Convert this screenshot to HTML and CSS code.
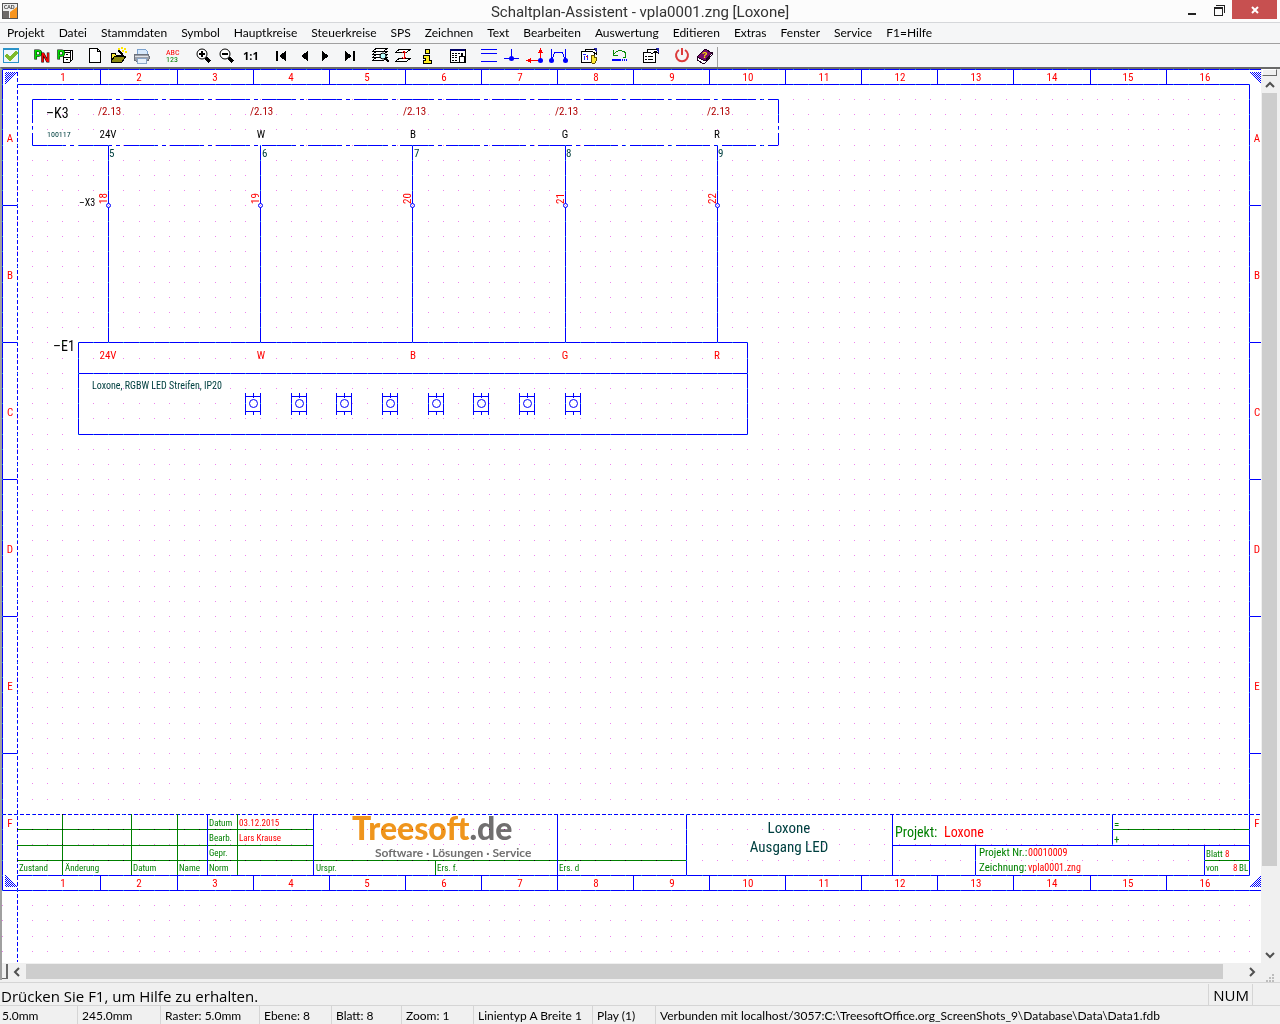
FILE: index.html
```html
<!DOCTYPE html>
<html lang="de">
<head>
    <meta charset="UTF-8">
    <meta name="viewport" content="width=device-width, initial-scale=1.0">
    <title>Schaltplan-Assistent - vpla0001.zng [Loxone]</title>
    <link rel="stylesheet" href="styles.css">
</head>
<body>
    <header class="titlebar">
        <svg class="app-icon" width="16" height="16" viewBox="0 0 16 16" aria-hidden="true">
            <rect width="16" height="16" fill="#555"/>
            <rect x="1" y="1" width="14" height="14" fill="#eee"/>
            <path d="M1 8h6v7H1z" fill="#6d6a68"/>
            <path d="M8 15V9l7-5v11z" fill="#f7941d"/>
            <text x="2" y="6" font-size="5" font-weight="700" fill="#333">CAD</text>
        </svg>
        <h1>Schaltplan-Assistent - vpla0001.zng [Loxone]</h1>
        <div class="window-buttons">
            <button class="win-btn" aria-label="Minimieren"><svg width="10" height="12"><path d="M1 9h8v2H1z" fill="#222"/></svg></button>
            <button class="win-btn" aria-label="Wiederherstellen"><svg width="12" height="12"><path d="M1 3h8v8H1zM1 4h8M3 1h8v8" fill="none" stroke="#222" shape-rendering="crispEdges"/></svg></button>
            <button class="win-btn close" aria-label="Schließen"><svg width="10" height="10"><path d="M2 2l6 6M8 2L2 8" stroke="#fff" stroke-width="2"/></svg></button>
        </div>
    </header>

    <nav class="menubar">
        <button>Projekt</button>
        <button>Datei</button>
        <button>Stammdaten</button>
        <button>Symbol</button>
        <button>Hauptkreise</button>
        <button>Steuerkreise</button>
        <button>SPS</button>
        <button>Zeichnen</button>
        <button>Text</button>
        <button>Bearbeiten</button>
        <button>Auswertung</button>
        <button>Editieren</button>
        <button>Extras</button>
        <button>Fenster</button>
        <button>Service</button>
        <button>F1=Hilfe</button>
    </nav>

    <div class="toolbar" role="toolbar">
        <div class="tool-group">
            <button aria-label="Auswahl"><svg viewBox="0 0 23 18"><rect x="3" y="1" width="15" height="14" fill="#eef7fc" stroke="#2b93c8"/><path d="M3 2h15" stroke="#2b93c8" stroke-width="2"/><path d="M6 8l4 4 7-7" fill="none" stroke="#7cba2c" stroke-width="3"/></svg></button>
        </div>
        <div class="tool-group">
            <button aria-label="Projekt neu"><svg viewBox="0 0 23 18"><text class="ico-letter green" x="3" y="12">P</text><text class="ico-letter red" x="10" y="15">N</text></svg></button>
            <button aria-label="Projekt archivieren"><svg viewBox="0 0 23 18"><path d="M9 5l2-2h7v10l-2 2H9z" fill="#fff" stroke="#000"/><path d="M9 5h7v10M16 5l2-2M9 10h7M12 7h2M12 12h2" fill="none" stroke="#000"/><text class="ico-letter green" x="3" y="12">P</text></svg></button>
        </div>
        <div class="tool-group">
            <button aria-label="Neu"><svg viewBox="0 0 23 18"><path d="M4.500 1.500h8l3 3v11h-11zM12.500 1.500v3h3" fill="#fff" stroke="#000"/></svg></button>
            <button aria-label="Öffnen"><svg viewBox="0 0 23 18"><path d="M3 14V6h4l1 2h6v3" fill="#ffef3c" stroke="#000"/><path d="M3 14l4-5h11l-4 6H3z" fill="#8b8b10" stroke="#000"/><path d="M9 4l5 5 3 1-2-3-4-4z" fill="#000"/><path d="M10 2h2M13 1h2M16 2h2M14 4h2M17 5h2" stroke="#ffe800" stroke-width="2"/></svg></button>
            <button aria-label="Drucken"><svg viewBox="0 0 23 18"><path d="M6 8V2h8l2 2v4" fill="#d6e8fb" stroke="#7ba2cf"/><rect x="3" y="7" width="15" height="7" rx="2" fill="#9a9fa8" stroke="#6c717b"/><rect x="6" y="11" width="9" height="5" fill="#e8f1fb" stroke="#8aa5c7"/><path d="M4 9h13" stroke="#dfe2e8"/></svg></button>
        </div>
        <div class="tool-group">
            <button aria-label="Nummerierung"><svg viewBox="0 0 23 18"><text class="ico-abc red" x="4" y="8">ABC</text><text class="ico-abc dark-green" x="4" y="15">123</text></svg></button>
        </div>
        <div class="tool-group">
            <button aria-label="Vergrößern"><svg viewBox="0 0 23 18"><circle cx="9" cy="7" r="5" fill="#fff" stroke="#000"/><path d="M6 7h6M9 4v6" stroke="#000" stroke-width="2"/><path d="M13 11l4 4" stroke="#000" stroke-width="3"/></svg></button>
            <button aria-label="Verkleinern"><svg viewBox="0 0 23 18"><circle cx="9" cy="7" r="5" fill="#fff" stroke="#000"/><path d="M6 7h6" stroke="#000" stroke-width="2"/><path d="M13 11l4 4" stroke="#000" stroke-width="3"/></svg></button>
            <button aria-label="Zoom 1:1"><svg viewBox="0 0 23 18"><text class="ico-one" x="4" y="13">1:1</text></svg></button>
        </div>
        <div class="tool-group">
            <button aria-label="Erstes Blatt"><svg viewBox="0 0 23 18"><path d="M6 4h2v10H6zM16 4v10L9 9z"/></svg></button>
            <button aria-label="Blatt zurück"><svg viewBox="0 0 23 18"><path d="M15 4v10L8 9z"/></svg></button>
            <button aria-label="Blatt vor"><svg viewBox="0 0 23 18"><path d="M6 4v10l7-5z"/></svg></button>
            <button aria-label="Letztes Blatt"><svg viewBox="0 0 23 18"><path d="M6 4v10l7-5zM14 4h2v10h-2z"/></svg></button>
        </div>
        <div class="tool-group">
            <button aria-label="Ebenen suchen"><svg viewBox="0 0 23 18"><path d="M3 4l4-3h11l-4 3zM3 7l4-3h11l-4 3zM3 10l4-3h11l-4 3zM3 13l4-3h11l-4 3z" fill="#fff" stroke="#000"/><circle cx="13" cy="9" r="3" fill="#bff" stroke="#000"/><path d="M15 11l4 4" stroke="#000" stroke-width="2"/></svg></button>
            <button aria-label="Ebene wechseln"><svg viewBox="0 0 23 18"><path d="M3 5l4-3h11l-4 3zM3 14l4-3h11l-4 3z" fill="#fff" stroke="#000"/><path d="M11 4v8M9 6l2-2 2 2M9 10l2 2 2-2" fill="none" stroke="#e00"/></svg></button>
            <button aria-label="Info"><svg viewBox="0 0 23 18"><path d="M9 2h4v4H9zM7 8h6v5h2v3H7v-3h2v-2H7z" fill="#ffee20" stroke="#000"/></svg></button>
        </div>
        <div class="tool-group">
            <button aria-label="Tabelle"><svg viewBox="0 0 23 18"><rect x="3" y="2" width="15" height="13" fill="#fff" stroke="#000"/><path d="M3 3h15" stroke="#006" stroke-width="2"/><path d="M5 6h10M5 8h6M5 10h6M5 13h6" stroke="#000" stroke-dasharray="2 1"/><path d="M12 15v-6h2V6h1v3h2v6z" fill="#fff" stroke="#000"/></svg></button>
        </div>
        <div class="tool-group">
            <button aria-label="Potentiale"><svg viewBox="0 0 23 18"><path d="M3 2.500h16M3 6.500h16M3 14.500h16" stroke="#00f"/></svg></button>
            <button aria-label="Abzweig"><svg viewBox="0 0 23 18"><path d="M3 11.500h15M10.500 2v9" stroke="#00f"/><circle cx="10.500" cy="11.500" r="2.500" fill="#00f"/></svg></button>
            <button aria-label="Querverweis"><svg viewBox="0 0 23 18"><path d="M16.500 4v9M6 13.500h9" stroke="#f00"/><path d="M14 6l2.500-5 2.500 5zM7 11v5l-5-2.500z" fill="#f00"/><circle cx="16.500" cy="13.500" r="2.500" fill="#00f"/></svg></button>
            <button aria-label="Verbindung"><svg viewBox="0 0 23 18"><path d="M4.500 2v11M18.500 2v11M5 12l3-7h7l3 7" fill="none" stroke="#00f"/><circle cx="4.500" cy="13.500" r="2.500" fill="#00f"/><circle cx="18.500" cy="13.500" r="2.500" fill="#00f"/></svg></button>
        </div>
        <div class="tool-group">
            <button aria-label="Symboleigenschaften"><svg viewBox="0 0 23 18"><rect x="3" y="4" width="13" height="11" fill="#fff" stroke="#000"/><path d="M7 2h11v5l-4-3H8z" fill="#fff" stroke="#000"/><path d="M16 1h3v5z" fill="#22a"/><path d="M5 7h3M6 9v4M9 8v5" stroke="#22f"/><path d="M8 9l2 2" stroke="#e00"/><path d="M14 8h2v2h2v4l-1 2h-3l-1-4z" fill="#ffe930" stroke="#665500"/></svg></button>
        </div>
        <div class="tool-group">
            <button aria-label="Rückgängig"><svg viewBox="0 0 23 18"><path d="M5 7c3-5 12-4 12 1 0 2-1 3-3 3M4 3v5h5" fill="none" stroke="#0a8a0a"/><path d="M3 13h9" stroke="#00f" stroke-width="2"/><path d="M13 13h5" stroke="#00f" stroke-width="2" stroke-dasharray="1 1"/></svg></button>
        </div>
        <div class="tool-group">
            <button aria-label="Eigenschaften"><svg viewBox="0 0 23 18"><rect x="3" y="5" width="12" height="10" fill="#fff" stroke="#000"/><path d="M5 9h2M8 9h5M5 12h2M8 12h5" stroke="#000"/><path d="M8 2h10v4l-3-2-3 3-2-2H7z" fill="#fff" stroke="#000"/><path d="M16 1h3v6z" fill="#22a"/></svg></button>
        </div>
        <div class="tool-group">
            <button aria-label="Beenden"><svg class="smooth" viewBox="0 0 23 18"><path d="M8 3a6 6 0 1 0 6 0M11 1v7" fill="none" stroke="#dc3c3c" stroke-width="2"/></svg></button>
            <button aria-label="Hilfe"><svg viewBox="0 0 23 18"><path d="M3 10l8-8 7 4-7 9z" fill="#7d0a6a" stroke="#200020"/><path d="M3 10v3l7 4 8-9V6l-7 8z" fill="#fff" stroke="#200020"/><text class="ico-help" x="8" y="11">?</text></svg></button>
        </div>
    </div>

    <main class="workspace">
        <svg class="sheet" role="img" aria-label="Stromlaufplan Blatt 8">
            <defs>
                <pattern id="hatch" width="2" height="2" patternUnits="userSpaceOnUse">
                    <rect width="2" height="2" fill="#fff"/>
                    <path d="M0 0h1v1H0zM1 1h1v1H1z" fill="#00f"/>
                </pattern>
            </defs>
            <rect width="100%" height="100%" fill="#fff"/>
            <!-- window coordinates, shifted to the corner of the sheet pane -->
            <g transform="translate(-2 -69)">
                <!-- sheet frame -->
                <path class="line" d="M2 890V69H1261M17 84H1249V875H17M2 890H1261"/>
                <path class="line dashed" d="M17 72V962M2 814H1261"/>
                <path class="line" d="M2 205H17M2 342H17M2 479H17M2 616H17M2 753H17M1249 205h14M1249 342h14M1249 479h14M1249 616h14M1249 753h14"/>
                <g id="ruler"></g>
                <path class="hatch" d="M5 72h12L5 84zM5 875v12h12zM1249 72h14v14zM1249 887l14-13v13z"/>

                <!-- actuator K3 -->
                <path class="line dashdot" d="M32 99H778M32 145H778"/>
                <path class="line dashdot-short" d="M32 99V145M778 99V145"/>
                <text class="cad t14" x="46" y="118">–K3</text>
                <text class="cad t8 teal" x="47" y="137">100117</text>
                <g class="cad t11 maroon">
                    <text x="98" y="115">/2.13</text>
                    <text x="250" y="115">/2.13</text>
                    <text x="403" y="115">/2.13</text>
                    <text x="555" y="115">/2.13</text>
                    <text x="707" y="115">/2.13</text>
                </g>
                <g class="cad t11 mid">
                    <text x="108" y="138">24V</text>
                    <text x="261" y="138">W</text>
                    <text x="413" y="138">B</text>
                    <text x="565" y="138">G</text>
                    <text x="717" y="138">R</text>
                </g>
                <g class="cad t11 teal">
                    <text x="109" y="157">5</text>
                    <text x="262" y="157">6</text>
                    <text x="414" y="157">7</text>
                    <text x="566" y="157">8</text>
                    <text x="718" y="157">9</text>
                </g>

                <!-- wires and terminals X3 -->
                <path class="line" d="M108 145V342M260 145V342M412 145V342M565 145V342M717 145V342"/>
                <g class="terminal">
                    <circle cx="108.500" cy="205.500" r="2"/>
                    <circle cx="260.500" cy="205.500" r="2"/>
                    <circle cx="412.500" cy="205.500" r="2"/>
                    <circle cx="565.500" cy="205.500" r="2"/>
                    <circle cx="717.500" cy="205.500" r="2"/>
                </g>
                <text class="cad t10" x="79" y="206">–X3</text>
                <g class="cad t11 red">
                    <text transform="translate(107 204) rotate(-90)">18</text>
                    <text transform="translate(259 204) rotate(-90)">19</text>
                    <text transform="translate(411 204) rotate(-90)">20</text>
                    <text transform="translate(564 204) rotate(-90)">21</text>
                    <text transform="translate(716 204) rotate(-90)">22</text>
                </g>

                <!-- LED strip E1 -->
                <path class="line" d="M78 342H747V434H78zM78 373H747"/>
                <text class="cad t14" x="53" y="351">–E1</text>
                <g class="cad t11 mid red">
                    <text x="108" y="359">24V</text>
                    <text x="261" y="359">W</text>
                    <text x="413" y="359">B</text>
                    <text x="565" y="359">G</text>
                    <text x="717" y="359">R</text>
                </g>
                <text class="cad t10 teal" x="92" y="389">Loxone, RGBW LED Streifen, IP20</text>
                <g id="leds"></g>

                <!-- title block -->
                <path class="line dark-green" d="M17 829H313M17 845H313M17 860H686M62 814V875M131 814V875M177 814V875M237 814V875M435 860V875M1112 829H1249M1204 860H1249"/>
                <path class="line" d="M207 814V875M313 814V875M557 814V875M686 814V875M892 814V875M892 845H1249M975 845V875M1112 814V845M1204 845V875"/>
                <g class="cad t9 dark-green">
                    <text x="209" y="826">Datum</text>
                    <text x="209" y="841">Bearb.</text>
                    <text x="209" y="856">Gepr.</text>
                    <text x="19" y="871">Zustand</text>
                    <text x="65" y="871">Änderung</text>
                    <text x="133" y="871">Datum</text>
                    <text x="179" y="871">Name</text>
                    <text x="209" y="871">Norm</text>
                    <text x="316" y="871">Urspr.</text>
                    <text x="437" y="871">Ers. f.</text>
                    <text x="559" y="871">Ers. d</text>
                    <text x="1206" y="857">Blatt</text>
                    <text x="1206" y="871">von</text>
                    <text x="1239" y="871">BL</text>
                </g>
                <g class="cad t9 red">
                    <text x="239" y="826">03.12.2015</text>
                    <text x="239" y="841">Lars Krause</text>
                    <text x="1225" y="857">8</text>
                    <text x="1233" y="871">8</text>
                </g>
                <text class="logo" x="352" y="840"><tspan class="orange">Treesoft</tspan><tspan class="grey">.de</tspan></text>
                <text class="logo-sub" x="375" y="857">Software · Lösungen · Service</text>
                <g class="cad t15 mid teal">
                    <text x="789" y="833">Loxone</text>
                    <text x="789" y="852">Ausgang LED</text>
                </g>
                <text class="cad t14 dark-green" x="895" y="837">Projekt:</text>
                <text class="cad t14 red" x="944" y="837">Loxone</text>
                <g class="cad t11 dark-green">
                    <text x="979" y="856">Projekt Nr.:</text>
                    <text x="979" y="871">Zeichnung:</text>
                    <text x="1114" y="828">=</text>
                    <text x="1114" y="843">+</text>
                </g>
                <g class="cad t10 red">
                    <text x="1028" y="856">00010009</text>
                    <text x="1028" y="871">vpla0001.zng</text>
                </g>
                <path id="raster" class="raster" d=""/>
            </g>
        </svg>

        <div class="vscroll">
            <div class="split-h"></div>
            <button class="scroll-btn" aria-label="Nach oben"><svg width="10" height="8"><path d="M1 6l4-4 4 4" fill="none" stroke="#505050" stroke-width="2"/></svg></button>
            <div class="thumb"></div>
            <div class="track"></div>
            <button class="scroll-btn" aria-label="Nach unten"><svg width="10" height="8"><path d="M1 2l4 4 4-4" fill="none" stroke="#505050" stroke-width="2"/></svg></button>
        </div>

        <div class="hscroll">
            <div class="split-v"></div>
            <button class="scroll-btn" aria-label="Nach links"><svg width="8" height="10"><path d="M6 1L2 5l4 4" fill="none" stroke="#505050" stroke-width="2"/></svg></button>
            <div class="thumb"></div>
            <div class="track"></div>
            <button class="scroll-btn" aria-label="Nach rechts"><svg width="8" height="10"><path d="M2 1l4 4-4 4" fill="none" stroke="#505050" stroke-width="2"/></svg></button>
        </div>
        <div class="grip"><svg width="9" height="9"><path d="M6 0h2v2H6zM3 3h2v2H3zM6 3h2v2H6zM0 6h2v2H0zM3 6h2v2H3zM6 6h2v2H6z" fill="#bdbdbd"/></svg></div>
    </main>

    <footer>
        <div class="helpbar">
            <span class="help-text">Drücken Sie F1, um Hilfe zu erhalten.</span>
            <span class="num">NUM</span>
        </div>
        <div class="statusbar">
            <span>5.0mm</span>
            <span>245.0mm</span>
            <span>Raster: 5.0mm</span>
            <span>Ebene: 8</span>
            <span>Blatt: 8</span>
            <span>Zoom: 1</span>
            <span>Linientyp A Breite 1</span>
            <span>Play (1)</span>
            <span>Verbunden mit localhost/3057:C:\TreesoftOffice.org_ScreenShots_9\Database\Data\Data1.fdb</span>
        </div>
    </footer>

    <script src="script.js"></script>
</body>
</html>
```
FILE: styles.css
```css
* {
    margin: 0;
    padding: 0;
    box-sizing: border-box;
}

body {
    height: 100vh;
    display: flex;
    flex-direction: column;
    background-color: #f0f0f0;
    font-family: Lato, "Open Sans", sans-serif;
    font-size: 12px;
    color: #000;
    overflow: hidden;
}

button {
    border: none;
    background: none;
    font: inherit;
    color: inherit;
}

/* Title bar */
.titlebar {
    height: 23px;
    display: grid;
    grid-template-columns: 1fr auto 1fr;
    background-color: #fcfcfc;
    border-bottom: 1px solid #d5d7da;
}

.app-icon {
    margin: 3px 0 0 2px;
}

.titlebar h1 {
    font: 400 15px/24px Roboto, sans-serif;
    color: #333;
}

.window-buttons {
    display: flex;
    justify-content: flex-end;
    padding-right: 3px;
}

.win-btn {
    width: 27px;
    height: 19px;
    display: flex;
    align-items: center;
    justify-content: center;
}

.win-btn.close {
    width: 45px;
    background-color: #c75050;
}

/* Menu */
.menubar {
    height: 21px;
    display: flex;
    background-color: #f5f6f7;
    border-bottom: 1px solid #a0a0a0;
}

.menubar button {
    padding: 0 7px;
    line-height: 20px;
}

/* Toolbar */
.toolbar {
    height: 23px;
    display: flex;
    gap: 8px;
    padding-top: 3px;
    background-color: #f5f6f7;
}

.tool-group {
    display: flex;
}

.tool-group:last-child {
    border-right: 1px solid #a0a0a0;
}

.toolbar button,
.toolbar svg {
    display: block;
    width: 23px;
    height: 18px;
}

.toolbar svg {
    shape-rendering: crispEdges;
}

.toolbar circle,
.toolbar .smooth {
    shape-rendering: auto;
}

.ico-letter {
    font: 700 12px "Liberation Sans", sans-serif;
    stroke: #000;
    stroke-width: 1px;
    paint-order: stroke;
}

.ico-abc {
    font: 8px "Roboto Condensed", sans-serif;
}

.ico-one {
    font: 700 11px "Open Sans", sans-serif;
}

.ico-help {
    font: 700 9px "Liberation Sans", sans-serif;
    fill: #ffe800;
}

/* Sheet and scroll bars */
.workspace {
    flex: 1;
    display: grid;
    grid-template-columns: 1fr 19px;
    grid-template-rows: 1fr 17px;
    border-top: 2px solid #696969;
    border-left: 2px solid #a0a0a0;
    min-height: 0;
}

.sheet {
    width: 100%;
    height: 100%;
    min-height: 0;
    overflow: hidden;
}

.vscroll {
    display: flex;
    flex-direction: column;
    padding: 0 3px 0 1px;
}

.hscroll {
    display: flex;
    padding: 1px 0;
}

.split-h {
    height: 7px;
    border: 1px solid #696969;
    border-top-color: #fff;
    border-left-color: #fff;
}

.split-v {
    width: 6px;
    border-right: 2px solid #696969;
    border-bottom: 1px solid #696969;
}

.scroll-btn {
    flex: none;
    width: 17px;
    height: 17px;
    display: flex;
    align-items: center;
    justify-content: center;
}

.vscroll .scroll-btn {
    width: 15px;
}

.hscroll .scroll-btn {
    height: 15px;
    margin: 0 1px 0 0;
}

.thumb {
    flex: 77;
    background-color: #cdcdcd;
}

.track {
    flex: 8;
}

.hscroll .thumb {
    flex: 60;
}

.hscroll .track {
    flex: 1;
}

.grip {
    padding: 8px 0 0 5px;
}

/* Drawing */
.line {
    fill: none;
    stroke: #00f;
    shape-rendering: crispEdges;
}

.line.dark-green {
    stroke: #008000;
    fill: none;
}

.dashed {
    stroke-dasharray: 4 2;
}

.dashdot {
    stroke-dasharray: 34 4 4 4;
}

.dashdot-short {
    stroke-dasharray: 24 3 4 3;
}

.hatch {
    fill: url(#hatch);
    shape-rendering: crispEdges;
}

.terminal {
    fill: #fff;
    stroke: #00f;
}

/* raster dots invert whatever line they fall on */
.raster {
    stroke: #117d11;
    mix-blend-mode: difference;
    shape-rendering: crispEdges;
}

.cad {
    font-family: "Roboto Condensed", "Open Sans Condensed", "DejaVu Sans Condensed", sans-serif;
}

.t8 {
    font-size: 8px;
}

.t9 {
    font-size: 9px;
}

.t10 {
    font-size: 10px;
}

.t11 {
    font-size: 11px;
}

.t14 {
    font-size: 14px;
}

.t15 {
    font-size: 15px;
}

.mid {
    text-anchor: middle;
}

.red {
    fill: #f00;
}

.maroon {
    fill: #b00000;
}

.teal {
    fill: #004040;
}

.dark-green {
    fill: #008000;
}

.green {
    fill: #0d0;
}

.logo {
    font: 900 32px Lato, sans-serif;
}

.orange {
    fill: #ef951c;
}

.grey {
    fill: #706f6f;
}

.logo-sub {
    font: 700 12px Lato, sans-serif;
    fill: #706f6f;
}

/* Status bars */
.helpbar {
    height: 24px;
    display: flex;
    align-items: center;
    padding-right: 27px;
    font: 15px/20px "Open Sans", sans-serif;
    border-top: 1px solid #d5d5d5;
    border-bottom: 1px solid #d5d5d5;
    margin-top: 2px;
}

.help-text {
    flex: 1;
    padding: 3px 0 0 1px;
}

.num {
    padding: 1px 3px 0 4px;
    border-left: 1px solid #d5d5d5;
    border-right: 1px solid #d5d5d5;
}

.statusbar {
    height: 18px;
    display: grid;
    grid-template-columns: 77px 83px 99px 72px 70px 72px 119px 63px 1fr;
    line-height: 20px;
}

.statusbar span {
    padding-left: 4px;
    border-left: 1px solid #d5d5d5;
    white-space: nowrap;
}

.statusbar span:first-child {
    padding-left: 2px;
    border-left: none;
}
```
FILE: script.js
```javascript
const ns = 'http://www.w3.org/2000/svg';

function add(parent, name, attrs, text) {
    const el = document.createElementNS(ns, name);
    for (const key in attrs) {
        el.setAttribute(key, attrs[key]);
    }
    if (text) {
        el.textContent = text;
    }
    parent.appendChild(el);
}

// Column numbers and row letters round the frame
const ruler = document.getElementById('ruler');
for (let i = 0; i < 16; i++) {
    const x = Math.round(63 + i * 76.1);
    add(ruler, 'text', { class: 'cad t11 mid red', x: x, y: 81 }, String(i + 1));
    add(ruler, 'text', { class: 'cad t11 mid red', x: x, y: 887 }, String(i + 1));
    if (i < 15) {
        const tick = Math.floor(100.92 + i * 76.085);
        add(ruler, 'path', { class: 'line', d: `M${tick} 69V84M${tick} 875V890` });
    }
}
['A', 'B', 'C', 'D', 'E', 'F'].forEach((letter, i) => {
    add(ruler, 'text', { class: 'cad t11 mid red', x: 10, y: 142 + i * 137 }, letter);
    add(ruler, 'text', { class: 'cad t11 mid red', x: 1257, y: 142 + i * 137 }, letter);
});

// LED symbols of the strip
const leds = document.getElementById('leds');
[245, 291, 336, 382, 428, 473, 519, 565].forEach(x => {
    add(leds, 'path', {
        class: 'line',
        d: `M${x} 393V415M${x + 15} 393V415M${x} 396h15M${x} 411h15M${x + 8} 393v5M${x + 8} 411v4`
    });
    add(leds, 'circle', { cx: x + 8.5, cy: 403.5, r: 4, fill: 'none', stroke: '#00f' });
});

// 5 mm raster
let dots = '';
for (let j = -1; j <= 57; j++) {
    const y = Math.floor(84.3 + j * 15.21);
    for (let i = -1; i <= 81; i++) {
        const x = Math.floor(17.35 + i * 15.216);
        dots += `M${x} ${y}h1`;
    }
}
document.getElementById('raster').setAttribute('d', dots);
```
